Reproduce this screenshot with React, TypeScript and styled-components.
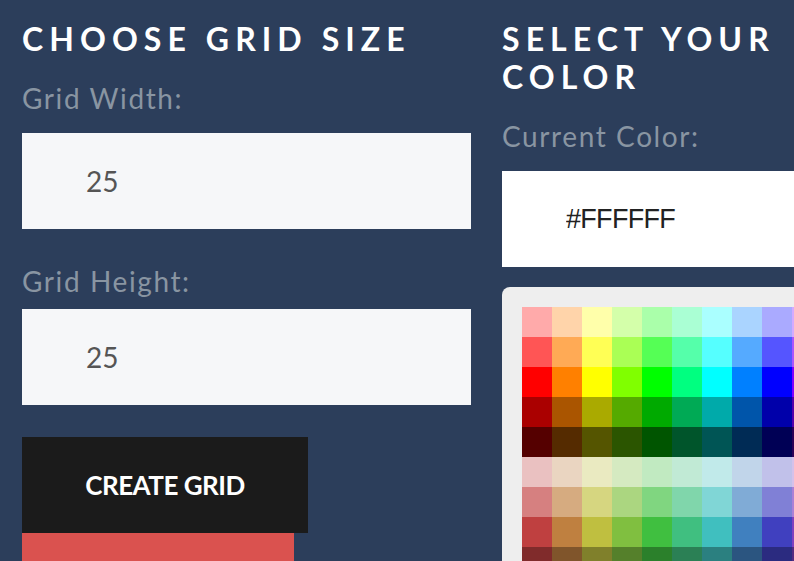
import * as React from 'react';
import styled, { createGlobalStyle } from 'styled-components';

const GlobalStyle = createGlobalStyle`
  html, body {
    margin: 0;
    padding: 0;
    overflow: hidden;
    background: #2c3e5b;
  }
  * { box-sizing: border-box; }
`;

const HUES = [
  ['#ffaaaa', '#ff5555', '#ff0000', '#aa0000', '#550000', '#eac1c1', '#d68080', '#bf4040', '#802b2b'],
  ['#ffd4aa', '#ffaa55', '#ff8000', '#aa5500', '#552b00', '#ead5c1', '#d6ab80', '#bf8040', '#80552b'],
  ['#ffffaa', '#ffff55', '#ffff00', '#aaaa00', '#555500', '#eaeac1', '#d6d680', '#bfbf40', '#80802b'],
  ['#d4ffaa', '#aaff55', '#80ff00', '#55aa00', '#2b5500', '#d5eac1', '#abd680', '#80bf40', '#55802b'],
  ['#aaffaa', '#55ff55', '#00ff00', '#00aa00', '#005500', '#c1eac1', '#80d680', '#40bf40', '#2b802b'],
  ['#aaffd4', '#55ffaa', '#00ff80', '#00aa55', '#00552b', '#c1ead5', '#80d6ab', '#40bf80', '#2b8055'],
  ['#aaffff', '#55ffff', '#00ffff', '#00aaaa', '#005555', '#c1eaea', '#80d6d6', '#40bfbf', '#2b8080'],
  ['#aad4ff', '#55aaff', '#0080ff', '#0055aa', '#002b55', '#c1d5ea', '#80abd6', '#4080bf', '#2b5580'],
  ['#aaaaff', '#5555ff', '#0000ff', '#0000aa', '#000055', '#c1c1ea', '#8080d6', '#4040bf', '#2b2b80'],
  ['#d4aaff', '#aa55ff', '#8000ff', '#5500aa', '#2b0055', '#d5c1ea', '#ab80d6', '#8040bf', '#552b80'],
  ['#ffaaff', '#ff55ff', '#ff00ff', '#aa00aa', '#550055', '#eac1ea', '#d680d6', '#bf40bf', '#802b80'],
  ['#ffaad4', '#ff55aa', '#ff0080', '#aa0055', '#55002b', '#eac1d5', '#d680ab', '#bf4080', '#802b55'],
];

export default function App() {
  const [width, setWidth] = React.useState('25');
  const [height, setHeight] = React.useState('25');
  const [color, setColor] = React.useState('#FFFFFF');

  const rows = HUES[0].map((_, r) => HUES.map(h => h[r]));

  return (
    <Page>
      <GlobalStyle />
      <Column>
        <Heading>Choose Grid Size</Heading>
        <Label gap={19}>Grid Width:</Label>
        <NumberInput value={width} onChange={e => setWidth(e.target.value)} />
        <Label gap={12}>Grid Height:</Label>
        <NumberInput value={height} onChange={e => setHeight(e.target.value)} />
        <Buttons>
          <Button>Create Grid</Button>
          <Button danger>Clear Grid</Button>
        </Buttons>
      </Column>
      <Column wide>
        <Heading narrow>Select Your Color</Heading>
        <Label gap={19}>Current Color:</Label>
        <ColorInput value={color} onChange={e => setColor(e.target.value)} />
        <Palette>
          {rows.map((row, i) => (
            <SwatchRow key={i}>
              {row.map(c => (
                <Swatch key={c} style={{ background: c }} onClick={() => setColor(c.toUpperCase())} />
              ))}
            </SwatchRow>
          ))}
        </Palette>
      </Column>
    </Page>
  );
}

const Page = styled.div`
  display: flex;
  gap: 31px;
  padding: 20px 0 0 22px;
  font-family: Lato, "Open Sans", sans-serif;
  width: 1400px;
`;

const Column = styled.div<{ wide?: boolean }>`
  display: flex;
  flex-direction: column;
  width: ${p => (p.wide ? '620px' : '449px')};
  flex-shrink: 0;
`;

const Heading = styled.h2<{ narrow?: boolean }>`
  margin: 0 0 24px;
  color: #fff;
  font-size: 32px;
  line-height: 38px;
  font-weight: 700;
  letter-spacing: 0.19em;
  text-transform: uppercase;
  max-width: ${p => (p.narrow ? '300px' : 'none')};
`;

const Label = styled.label<{ gap: number }>`
  color: #8995a2;
  font-size: 28px;
  letter-spacing: 1.6px;
  line-height: 32px;
  margin-bottom: ${p => p.gap}px;
`;

const NumberInput = styled.input`
  height: 96px;
  border: none;
  outline: none;
  background: #f6f7f9;
  padding: 0 0 0 64px;
  font-family: Lato, "Open Sans", sans-serif;
  font-size: 28px;
  color: #555;
  margin-bottom: 36px;
`;

const ColorInput = styled.input`
  height: 96px;
  border: none;
  outline: none;
  background: #fff;
  padding: 0 0 0 64px;
  font-family: "Liberation Sans", Arial, sans-serif;
  font-size: 27px;
  letter-spacing: -0.7px;
  color: #222;
  margin-bottom: 20px;
`;

const Buttons = styled.div`
  display: flex;
  flex-direction: column;
  align-items: flex-start;
  margin-top: -4px;
`;

const Button = styled.button<{ danger?: boolean }>`
  width: ${p => (p.danger ? '272px' : '286px')};
  height: 96px;
  border: none;
  background: ${p => (p.danger ? '#da524f' : '#1b1b1b')};
  color: #fff;
  font-family: Lato, "Open Sans", sans-serif;
  font-size: 26px;
  font-weight: 700;
  text-transform: uppercase;
  letter-spacing: -0.5px;
  cursor: pointer;
`;

const Palette = styled.div`
  background: #eeeeee;
  border-radius: 8px;
  padding: 20px;
  display: flex;
  flex-direction: column;
`;

const SwatchRow = styled.div`
  display: flex;
`;

const Swatch = styled.div`
  width: 30px;
  height: 30px;
  cursor: pointer;
`;
